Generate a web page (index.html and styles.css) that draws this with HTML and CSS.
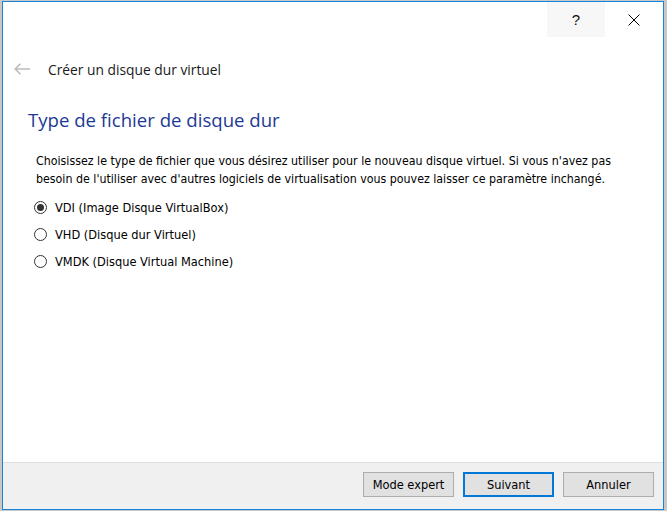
FILE: index.html
```html
<!DOCTYPE html>
<html lang="fr">
<head>
<meta charset="utf-8">
<link rel="stylesheet" href="styles.css">
</head>
<body>
<div class="window">
  <div class="titlebar">
    <div class="tb-btn help">?</div>
    <div class="tb-btn close">
      <svg width="12" height="12" viewBox="0 0 12 12"><path d="M0.5 0.5 L11.5 11.5 M11.5 0.5 L0.5 11.5" stroke="#000" stroke-width="1" fill="none"/></svg>
    </div>
  </div>
  <div class="header">
    <svg class="back" width="17" height="12" viewBox="0 0 17 12"><path d="M1 6 H16 M6.5 0.8 L1.2 6 L6.5 11.2" stroke="#bcbcbc" stroke-width="1.6" fill="none"/></svg>
    <span class="wiz-title">Créer un disque dur virtuel</span>
  </div>
  <div class="content">
    <h1 class="heading">Type de fichier de disque dur</h1>
    <p class="desc">Choisissez le type de fichier que vous désirez utiliser pour le nouveau disque virtuel. Si vous n'avez pas besoin de l'utiliser avec d'autres logiciels de virtualisation vous pouvez laisser ce paramètre inchangé.</p>
    <div class="options">
      <div class="opt"><span class="radio checked"></span><span>VDI (Image Disque VirtualBox)</span></div>
      <div class="opt"><span class="radio"></span><span>VHD (Disque dur Virtuel)</span></div>
      <div class="opt"><span class="radio"></span><span>VMDK (Disque Virtual Machine)</span></div>
    </div>
  </div>
  <div class="footer">
    <button class="btn">Mode expert</button>
    <button class="btn default">Suivant</button>
    <button class="btn">Annuler</button>
  </div>
</div>
</body>
</html>
```
FILE: styles.css
```css
html, body {
  margin: 0;
  padding: 0;
}
body {
  width: 667px;
  height: 511px;
  background: #c8c8c8;
  overflow: hidden;
}
.window {
  margin: 1px 0 0 2px;
  width: 660px;
  height: 507px;
  border: 1px solid #1883d7;
  background: #fff;
  display: flex;
  flex-direction: column;
}
.titlebar {
  height: 35px;
  display: flex;
  justify-content: flex-end;
}
.tb-btn {
  width: 58px;
  height: 35px;
  display: flex;
  align-items: center;
  justify-content: center;
}
.help {
  background: #f7f7f7;
  font-family: "Liberation Sans", sans-serif;
  font-size: 15px;
  color: #111;
}
.header {
  height: 50px;
  display: flex;
  align-items: center;
  padding-left: 11px;
  padding-top: 14px;
  box-sizing: border-box;
}
.back {
  margin-right: 17px;
}
.wiz-title {
  font-family: "Open Sans", sans-serif;
  font-size: 13.8px;
  color: #1a1a1a;
}
.content {
  flex: 1;
  padding: 0 0 0 25px;
}
.heading {
  margin: 20px 0 0;
  font-family: "Open Sans", sans-serif;
  font-weight: 400;
  font-size: 18.6px;
  line-height: 26px;
  color: #1c3a94;
}
.desc {
  margin: 19px 20px 0 8px;
  font-family: "DejaVu Sans Condensed", "DejaVu Sans", sans-serif;
  font-size: 12.3px;
  line-height: 18px;
  color: #000;
}
.options {
  margin: 10px 0 0 6px;
  display: flex;
  flex-direction: column;
  gap: 9px;
}
.opt {
  display: flex;
  align-items: center;
  height: 18px;
  font-family: "DejaVu Sans Condensed", "DejaVu Sans", sans-serif;
  font-size: 12.7px;
  color: #000;
}
.radio {
  width: 11px;
  height: 11px;
  border: 1px solid #333;
  border-radius: 50%;
  margin-right: 8px;
  position: relative;
  background: #fff;
}
.radio.checked::after {
  content: "";
  position: absolute;
  left: 2px;
  top: 2px;
  width: 7px;
  height: 7px;
  border-radius: 50%;
  background: #333;
}
.footer {
  height: 37px;
  border-top: 1px solid #dfdfdf;
  background: #f0f0f0;
  display: flex;
  align-items: flex-start;
  justify-content: flex-end;
  gap: 9px;
  padding: 9px 9px 0 0;
  box-sizing: content-box;
  flex-shrink: 0;
}
.btn {
  width: 91px;
  height: 25px;
  border: 1px solid #adadad;
  background: #e1e1e1;
  font-family: "DejaVu Sans Condensed", "DejaVu Sans", sans-serif;
  font-size: 12.7px;
  color: #000;
  padding: 0;
}
.btn.default {
  border: 2px solid #0078d7;
}
```
